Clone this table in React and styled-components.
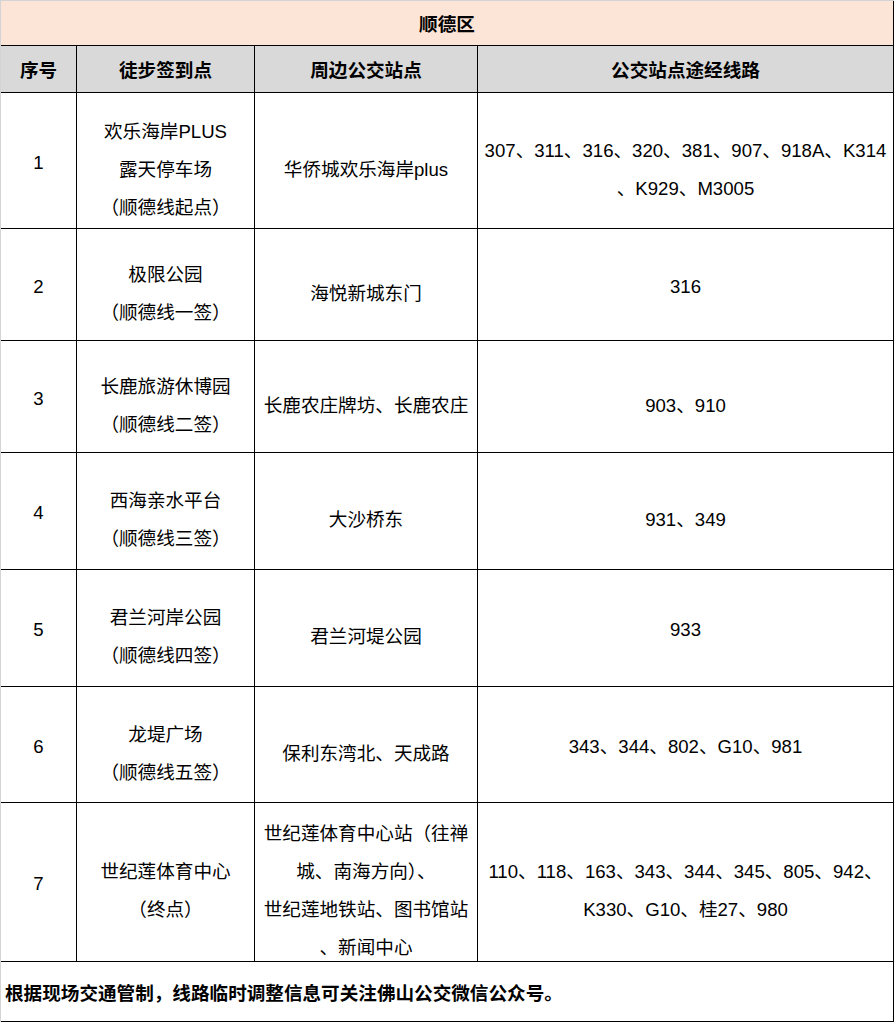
import React from 'react';
import styled, { createGlobalStyle } from 'styled-components';

const GlobalStyle = createGlobalStyle`
  html, body {
    margin: 0;
    padding: 0;
    background: #fff;
  }
  body {
    font-family: "Liberation Sans", "Noto Sans CJK SC", sans-serif;
    color: #000;
  }
`;

const COLUMNS = '76px 178px 223px 416px';

const Sheet = styled.div`
  width: 894px;
  box-sizing: border-box;
  border-top: 1px solid #d4d4d4;
  border-left: 1px solid #d4d4d4;
  display: flex;
  flex-direction: column;
`;

const Row = styled.div`
  display: grid;
  grid-template-columns: ${({ $span }) => ($span ? '1fr' : COLUMNS)};
  height: ${({ $h }) => $h}px;
  background: ${({ $bg }) => $bg || '#fff'};
`;

const Cell = styled.div`
  box-sizing: border-box;
  border-right: 1px solid #000;
  border-bottom: 1px solid #000;
  display: flex;
  flex-direction: column;
  justify-content: center;
  align-items: ${({ $left }) => ($left ? 'flex-start' : 'center')};
  text-align: ${({ $left }) => ($left ? 'left' : 'center')};
  padding: ${({ $left }) => ($left ? '4px 0 0 4px' : '18px 0 0')};
  font-size: 18.6px;
  line-height: 38px;
  font-weight: ${({ $bold }) => ($bold ? 700 : 400)};
  white-space: nowrap;
  overflow: hidden;
`;

const Title = styled(Cell)`
  padding: 4px 0 0;
`;

const HeadCell = styled(Cell)`
  padding: 4px 0 0;
`;

const NumCell = styled(Cell)`
  padding-top: 4px;
`;

const rows = [
  {
    h: 136,
    no: '1',
    point: ['欢乐海岸PLUS', '露天停车场', '（顺德线起点）'],
    stop: ['华侨城欢乐海岸plus'],
    lines: ['307、311、316、320、381、907、918A、K314', '、K929、M3005'],
  },
  { h: 112, no: '2', point: ['极限公园', '（顺德线一签）'], stop: ['海悦新城东门'], lines: ['316'], numeric: true },
  { h: 112, no: '3', point: ['长鹿旅游休博园', '（顺德线二签）'], stop: ['长鹿农庄牌坊、长鹿农庄'], lines: ['903、910'] },
  { h: 117, no: '4', point: ['西海亲水平台', '（顺德线三签）'], stop: ['大沙桥东'], lines: ['931、349'] },
  { h: 117, no: '5', point: ['君兰河岸公园', '（顺德线四签）'], stop: ['君兰河堤公园'], lines: ['933'], numeric: true },
  {
    h: 116,
    no: '6',
    point: ['龙堤广场', '（顺德线五签）'],
    stop: ['保利东湾北、天成路'],
    lines: ['343、344、802、G10、981'],
    numeric: true,
  },
  {
    h: 159,
    no: '7',
    point: ['世纪莲体育中心', '（终点）'],
    stop: ['世纪莲体育中心站（往禅', '城、南海方向）、', '世纪莲地铁站、图书馆站', '、新闻中心'],
    lines: ['110、118、163、343、344、345、805、942、', 'K330、G10、桂27、980'],
  },
];

const Lines = ({ items }) =>
  items.map((t, i) => <span key={i}>{t}</span>);

const App = () => {
  return (
    <>
      <GlobalStyle />
      <Sheet>
        <Row $span $h={45} $bg="#fce4d6">
          <Title $bold>顺德区</Title>
        </Row>
        <Row $h={47} $bg="#d9d9d9">
          <HeadCell $bold>序号</HeadCell>
          <HeadCell $bold>徒步签到点</HeadCell>
          <HeadCell $bold>周边公交站点</HeadCell>
          <HeadCell $bold>公交站点途经线路</HeadCell>
        </Row>
        {rows.map((r) => (
          <Row key={r.no} $h={r.h}>
            <NumCell>{r.no}</NumCell>
            <Cell>
              <Lines items={r.point} />
            </Cell>
            <Cell>
              <Lines items={r.stop} />
            </Cell>
            {r.numeric ? (
              <NumCell>
                <Lines items={r.lines} />
              </NumCell>
            ) : (
              <Cell>
                <Lines items={r.lines} />
              </Cell>
            )}
          </Row>
        ))}
        <Row $span $h={60}>
          <Cell $left $bold>
            根据现场交通管制，线路临时调整信息可关注佛山公交微信公众号。
          </Cell>
        </Row>
      </Sheet>
    </>
  );
};

export default App;
